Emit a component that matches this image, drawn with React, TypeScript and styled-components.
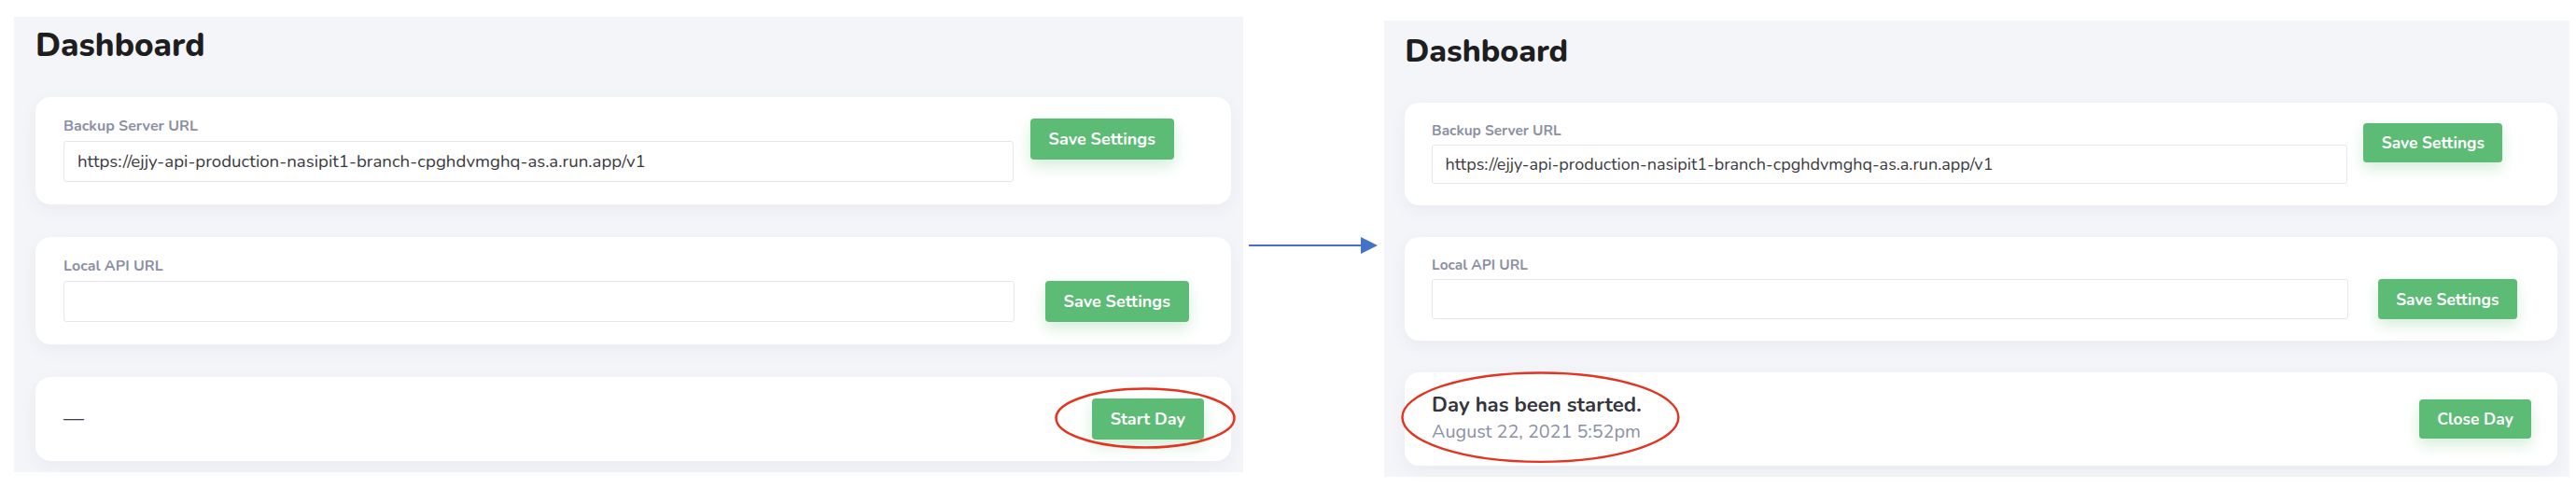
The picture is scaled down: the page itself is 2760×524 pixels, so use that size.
import React from "react";
import styled, { createGlobalStyle } from "styled-components";

const GlobalStyle = createGlobalStyle`
  html, body { margin: 0; padding: 0; background: #ffffff; }
  body { font-family: "Nunito", "Lato", "Noto Sans", sans-serif; }
  * { box-sizing: border-box; }
`;

const Page = styled.div`
  display: flex;
  align-items: flex-start;
  padding: 18px 0 0 15px;
  width: 2760px;
  height: 524px;
`;

const Panel = styled.section<{ $zoom?: number; $offsetTop?: number; $padTop?: number }>`
  flex: 0 0 auto;
  width: 1317px;
  background: #f4f5f9;
  padding: ${(p) => p.$padTop ?? 9}px 13px 12px 23px;
  margin-top: ${(p) => p.$offsetTop ?? 0}px;
  zoom: ${(p) => p.$zoom ?? 1};
  display: flex;
  flex-direction: column;
  gap: 35px;
`;

const Title = styled.h1`
  margin: 0 0 -1px 0;
  font-size: 35px;
  line-height: 43px;
  font-weight: 800;
  color: #1e1e20;
`;

const Card = styled.div<{ $status?: boolean }>`
  background: #ffffff;
  border-radius: 16px;
  box-shadow: 0 6px 18px rgba(40, 50, 90, 0.05);
  display: flex;
  align-items: ${(p) => (p.$status ? "center" : "stretch")};
  justify-content: ${(p) => (p.$status ? "space-between" : "flex-start")};
  padding: ${(p) => (p.$status ? "23px 29px 23px 30px" : "22px 30px 24px 30px")};
`;

const Field = styled.div`
  flex: 1 1 auto;
  display: flex;
  flex-direction: column;
`;

const Label = styled.label`
  font-size: 16px;
  line-height: 18px;
  font-weight: 700;
  color: #8b90a3;
  margin-bottom: 7px;
`;

const Input = styled.input`
  height: 44px;
  width: 100%;
  border: 1px solid #e7e7ea;
  border-radius: 3px;
  background: #ffffff;
  padding: 0 14px;
  font-family: inherit;
  font-size: 18.7px;
  color: #3a3a3e;
  outline: none;
`;

const Button = styled.button<{ $self?: string; $ml?: number; $mr?: number }>`
  flex: 0 0 auto;
  align-self: ${(p) => p.$self ?? "center"};
  margin: ${(p) => (p.$self === "flex-start" ? 1 : 0)}px ${(p) => p.$mr ?? 0}px 0
    ${(p) => p.$ml ?? 0}px;
  height: 44px;
  padding: 0 20px;
  border: none;
  border-radius: 4px;
  background: #5cbb74;
  color: #ffffff;
  font-family: inherit;
  font-size: 18px;
  font-weight: 700;
  box-shadow: 0 7px 16px rgba(92, 187, 116, 0.26);
  cursor: pointer;
`;

const Dash = styled.span`
  font-size: 22px;
  line-height: 22px;
  color: #3c3c46;
`;

const Status = styled.div`
  position: relative;
  display: flex;
  flex-direction: column;
`;

const StatusTitle = styled.div`
  font-size: 23px;
  line-height: 29px;
  font-weight: 700;
  color: #34343c;
`;

const StatusDate = styled.div`
  font-size: 20.5px;
  line-height: 29px;
  color: #8b90a5;
`;

const Annotated = styled.div`
  position: relative;
  display: flex;
`;

const Ring = styled.svg<{ $l: number; $t: number }>`
  position: absolute;
  left: ${(p) => p.$l}px;
  top: ${(p) => p.$t}px;
  pointer-events: none;
  overflow: visible;
`;

const Connector = styled.div`
  flex: 0 0 151px;
  padding: 236px 0 0 6px;
  display: flex;
`;

const RedRing = ({ l, t, w, h }: { l: number; t: number; w: number; h: number }) => (
  <Ring $l={l} $t={t} width={w} height={h} viewBox={`0 0 ${w} ${h}`}>
    <ellipse cx={w / 2} cy={h / 2} rx={w / 2 - 1.5} ry={h / 2 - 1.5} fill="none" stroke="#e4341f" strokeWidth="2.5" />
  </Ring>
);

const URL_VALUE = "https://ejjy-api-production-nasipit1-branch-cpghdvmghq-as.a.run.app/v1";

const SettingsCards = () => (
  <>
    <Card>
      <Field>
        <Label>Backup Server URL</Label>
        <Input defaultValue={URL_VALUE} />
      </Field>
      <Button $self="flex-start" $ml={18} $mr={31}>
        Save Settings
      </Button>
    </Card>
    <Card>
      <Field>
        <Label>Local API URL</Label>
        <Input defaultValue="" />
      </Field>
      <Button $self="flex-end" $ml={33} $mr={15}>
        Save Settings
      </Button>
    </Card>
  </>
);

export default function App() {
  return (
    <>
      <GlobalStyle />
      <Page>
        <Panel>
          <Title>Dashboard</Title>
          <SettingsCards />
          <Card $status>
            <Dash>—</Dash>
            <Annotated>
              <Button>Start Day</Button>
              <RedRing l={-40} t={-12} w={194} h={66} />
            </Annotated>
          </Card>
        </Panel>

        <Connector>
          <svg width="138" height="18" viewBox="0 0 138 18">
            <line x1="0" y1="9" x2="122" y2="9" stroke="#4472c4" strokeWidth="2" />
            <polygon points="120,0 138,9 120,18" fill="#4472c4" />
          </svg>
        </Connector>

        <Panel $zoom={0.964} $offsetTop={4} $padTop={14}>
          <Title>Dashboard</Title>
          <SettingsCards />
          <Card $status>
            <Status>
              <StatusTitle>Day has been started.</StatusTitle>
              <StatusDate>August 22, 2021 5:52pm</StatusDate>
              <RedRing l={-34} t={-24} w={310} h={102} />
            </Status>
            <Button>Close Day</Button>
          </Card>
        </Panel>
      </Page>
    </>
  );
}
